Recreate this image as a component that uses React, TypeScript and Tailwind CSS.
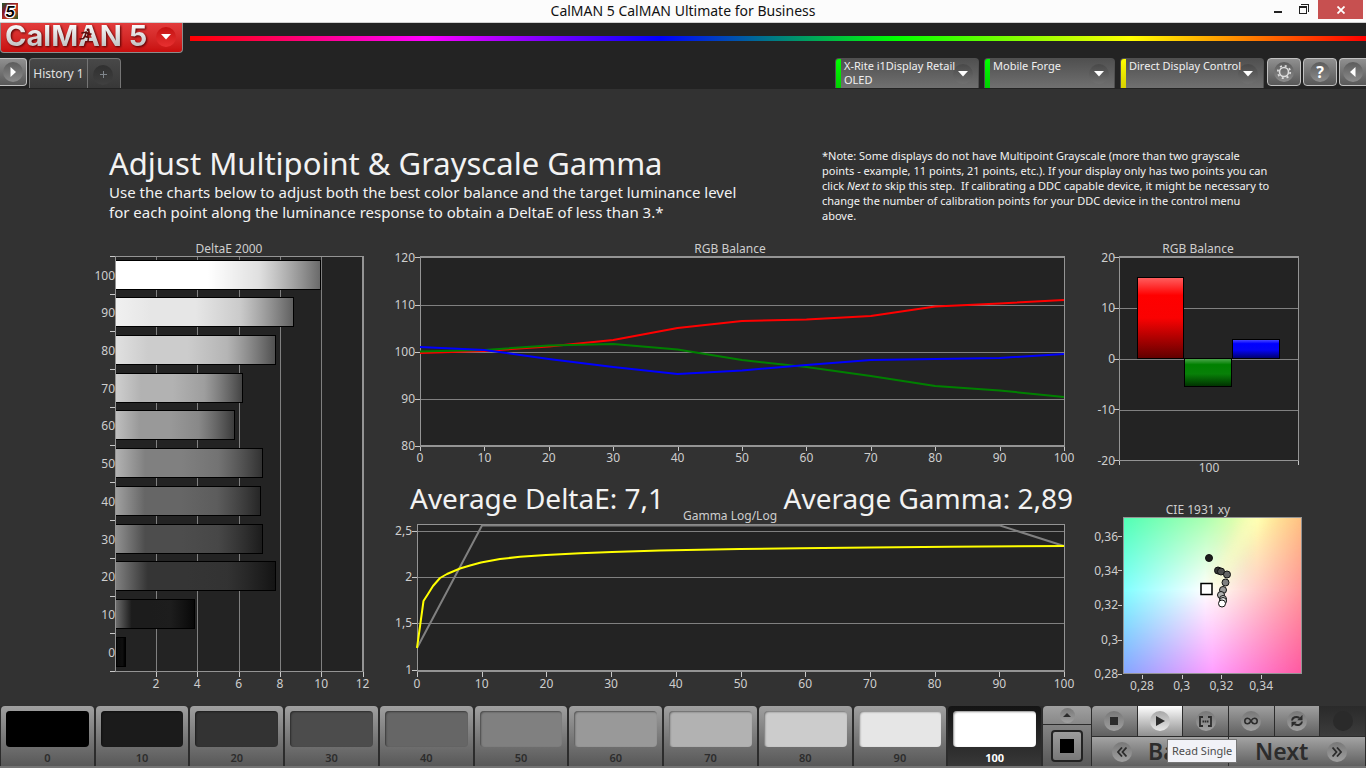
import React from "react";

type Point = [number, number];

const range = (n: number) => Array.from({ length: n }, (_, i) => i);
const toPoints = (pts: Point[]) => pts.map((p) => p.join(",")).join(" ");

const AXIS = "#949494";
const GRID = "#808080";
const TICK = "#c8c8c8";

function Label({ x, y, anchor = "middle", children }: { x: number; y: number; anchor?: "start" | "middle" | "end"; children: React.ReactNode }) {
  return (
    <text x={x} y={y - 1} textAnchor={anchor} dominantBaseline="central" className="fill-[#cecece] text-[12px]">
      {children}
    </text>
  );
}

const deltaBars = [
  { level: 100, end: 320, fill: "#ffffff", head: "#ffffff", tail: "#6a6a6a" },
  { level: 90, end: 293, fill: "#e6e6e6", head: "#f0f0f0", tail: "#606060" },
  { level: 80, end: 275, fill: "#cccccc", head: "#e0e0e0", tail: "#505050" },
  { level: 70, end: 242, fill: "#b2b2b2", head: "#cecece", tail: "#444444" },
  { level: 60, end: 234, fill: "#999999", head: "#bebebe", tail: "#3c3c3c" },
  { level: 50, end: 262, fill: "#808080", head: "#b2b2b2", tail: "#323232" },
  { level: 40, end: 260, fill: "#666666", head: "#a0a0a0", tail: "#262626" },
  { level: 30, end: 262, fill: "#4d4d4d", head: "#909090", tail: "#1c1c1c" },
  { level: 20, end: 275, fill: "#353535", head: "#808080", tail: "#141414" },
  { level: 10, end: 194, fill: "#1c1c1c", head: "#6c6c6c", tail: "#080808" },
  { level: 0, end: 125, fill: "#0c0c0c", head: "#000000", tail: "#000000" },
];

function DeltaEChart() {
  const pitch = 415 / 11;
  return (
    <svg viewBox="84 240 296 460" className="block h-auto w-full" role="img" aria-label="DeltaE 2000">
      <defs>
        {deltaBars.map((b) => (
          <linearGradient key={b.level} id={`delta-${b.level}`}>
            <stop offset="0" stopColor={b.head} />
            <stop offset="0.2" stopColor={b.fill} />
            <stop offset="0.45" stopColor={b.fill} />
            <stop offset="0.7" stopColor={b.fill} stopOpacity="0.86" />
            <stop offset="1" stopColor={b.tail} />
          </linearGradient>
        ))}
      </defs>
      <Label x={229} y={249}>DeltaE 2000</Label>
      <rect x="115" y="256" width="248" height="415" fill="#232323" />
      <g shapeRendering="crispEdges">
        {range(6).map((i) => (
          <g key={i}>
            <rect x={Math.round(156 + i * 41.3)} y="257" width="1" height="414" fill={GRID} />
            <rect x={Math.round(156 + i * 41.3)} y="672" width="1" height="5" fill={TICK} />
          </g>
        ))}
        {range(12).map((i) => (
          <rect key={i} x="110" y={Math.round(256 + i * pitch)} width="5" height="1" fill={TICK} />
        ))}
        <rect x="115" y="256" width="249" height="1" fill={AXIS} />
        <rect x="115" y="671" width="249" height="1" fill={AXIS} />
        <rect x="362" y="256" width="2" height="416" fill={AXIS} />
        {deltaBars.map((b, i) => {
          const y = Math.floor(260 + i * pitch);
          return (
            <g key={b.level}>
              <rect x="115" y={y} width={b.end - 114} height="30" fill="#000" />
              <rect x="116" y={y + 1} width={b.end - 116} height="28" fill="#232323" />
              <rect x="116" y={y + 1} width={b.end - 116} height="28" fill={`url(#delta-${b.level})`} />
            </g>
          );
        })}
        <rect x="115" y="256" width="1" height="416" fill={AXIS} />
      </g>
      {deltaBars.map((b, i) => (
        <Label key={b.level} x={115} y={276 + i * pitch} anchor="end">{b.level}</Label>
      ))}
      {range(6).map((i) => (
        <Label key={i} x={156 + i * 41.3} y={684}>{(i + 1) * 2}</Label>
      ))}
    </svg>
  );
}

const redLine = [353, 351, 346.5, 340, 328, 321, 319.5, 316, 306.5, 303.5, 300];
const greenLine = [351.5, 350, 345.5, 344, 349.5, 360, 367, 376, 386, 390.5, 397];
const blueLine = [347, 350, 359, 367, 374, 370.5, 365, 360, 359, 358, 354];

function RgbLineChart() {
  const px = (v: number) => 420 + v * 6.44;
  const line = (ys: number[]) => toPoints(ys.map((y, i) => [px(i * 10), y] as Point));
  return (
    <svg viewBox="380 240 698 232" className="block h-auto w-full" role="img" aria-label="RGB Balance by level">
      <Label x={730} y={249}>RGB Balance</Label>
      <rect x="420" y="257" width="644" height="189" fill="#232323" />
      <g shapeRendering="crispEdges">
        {[305, 352, 399].map((y) => (
          <rect key={y} x="420" y={y} width="644" height="1" fill={GRID} />
        ))}
        {[257, 305, 352, 399, 446].map((y) => (
          <rect key={y} x="415" y={y} width="5" height="1" fill={TICK} />
        ))}
        {range(11).map((i) => (
          <rect key={i} x={Math.round(px(i * 10))} y="447" width="1" height="4" fill={TICK} />
        ))}
        <rect x="420" y="256" width="645" height="2" fill={AXIS} />
        <rect x="420" y="445" width="645" height="2" fill={AXIS} />
        <rect x="420" y="256" width="1" height="190" fill={AXIS} />
        <rect x="1064" y="256" width="1" height="190" fill={AXIS} />
      </g>
      <g fill="none" strokeWidth="2" strokeLinejoin="round">
        <polyline points={line(redLine)} stroke="#ff0000" />
        <polyline points={line(greenLine)} stroke="#008000" />
        <polyline points={line(blueLine)} stroke="#0000ff" />
      </g>
      {range(5).map((i) => (
        <Label key={i} x={415} y={258 + i * 47.2} anchor="end">{120 - i * 10}</Label>
      ))}
      {range(11).map((i) => (
        <Label key={i} x={px(i * 10)} y={458}>{i * 10}</Label>
      ))}
    </svg>
  );
}

const gammaCurve: Point[] = [
  [417, 648], [423.5, 601], [428, 594], [433, 586], [440, 578], [447, 574], [460, 568.5], [470, 565.5], [481, 562.5], [500, 559],
  [520, 556.8], [546, 555], [580, 553.2], [612, 552], [660, 550.5], [740, 549], [800, 548.2], [870, 547.5], [950, 546.8], [1064, 546],
];

function GammaChart() {
  const px = (v: number) => 417 + v * 6.47;
  return (
    <svg viewBox="380 504 698 192" className="block h-auto w-full" role="img" aria-label="Gamma Log/Log">
      <Label x={730} y={516}>Gamma Log/Log</Label>
      <rect x="417" y="525" width="647" height="145" fill="#232323" />
      <g shapeRendering="crispEdges">
        {[531, 577, 623].map((y) => (
          <rect key={y} x="417" y={y} width="647" height="1" fill={GRID} />
        ))}
        {[531, 577, 623, 670].map((y) => (
          <rect key={y} x="412" y={y} width="5" height="1" fill={TICK} />
        ))}
        {range(11).map((i) => (
          <rect key={i} x={Math.round(px(i * 10))} y="672" width="1" height="5" fill={TICK} />
        ))}
        <rect x="417" y="524" width="648" height="1" fill={AXIS} />
        <rect x="417" y="670" width="648" height="2" fill={AXIS} />
        <rect x="417" y="524" width="1" height="147" fill={AXIS} />
        <rect x="1064" y="524" width="1" height="147" fill={AXIS} />
      </g>
      <polyline points="417,648 482,525.500 1000,525.500 1064,546" fill="none" stroke="#808080" strokeWidth="2" />
      <polyline points={toPoints(gammaCurve)} fill="none" stroke="#ffff00" strokeWidth="2" strokeLinejoin="round" />
      {["2,5", "2", "1,5", "1"].map((t, i) => (
        <Label key={t} x={412} y={531 + i * 46.4} anchor="end">{t}</Label>
      ))}
      {range(11).map((i) => (
        <Label key={i} x={px(i * 10)} y={684}>{i * 10}</Label>
      ))}
    </svg>
  );
}

function RgbBarChart() {
  return (
    <svg viewBox="1078 240 232 240" className="block h-auto w-full" role="img" aria-label="RGB Balance at 100">
      <defs>
        <linearGradient id="bar-red" x2="0" y2="1">
          <stop offset="0" stopColor="#ff6060" />
          <stop offset="0.22" stopColor="#ff0000" />
          <stop offset="0.5" stopColor="#fa0202" />
          <stop offset="1" stopColor="#600000" />
        </linearGradient>
        <linearGradient id="bar-green" x2="0" y2="1">
          <stop offset="0" stopColor="#50a850" />
          <stop offset="0.22" stopColor="#008000" />
          <stop offset="0.55" stopColor="#088008" />
          <stop offset="1" stopColor="#003000" />
        </linearGradient>
        <linearGradient id="bar-blue" x2="0" y2="1">
          <stop offset="0" stopColor="#5050ff" />
          <stop offset="0.22" stopColor="#0000ff" />
          <stop offset="0.55" stopColor="#0404f4" />
          <stop offset="1" stopColor="#000068" />
        </linearGradient>
      </defs>
      <Label x={1198} y={249}>RGB Balance</Label>
      <rect x="1120" y="257" width="178" height="204" fill="#232323" />
      <g shapeRendering="crispEdges">
        {[308, 359, 410].map((y) => (
          <rect key={y} x="1120" y={y} width="178" height="1" fill={GRID} />
        ))}
        {[257, 308, 359, 409, 460].map((y) => (
          <rect key={y} x="1114" y={y} width="5" height="1" fill={TICK} />
        ))}
        <rect x="1119" y="256" width="180" height="2" fill={AXIS} />
        <rect x="1119" y="460" width="180" height="1" fill={AXIS} />
        <rect x="1119" y="256" width="1" height="205" fill={AXIS} />
        <rect x="1298" y="256" width="1" height="205" fill={AXIS} />
        <rect x="1119" y="461" width="1" height="4" fill={TICK} />
        <rect x="1298" y="461" width="1" height="4" fill={TICK} />
        <rect x="1137.500" y="277.500" width="46" height="81" fill="url(#bar-red)" stroke="#000" />
        <rect x="1184.500" y="358.500" width="47" height="28" fill="url(#bar-green)" stroke="#000" />
        <rect x="1232.500" y="339.500" width="47" height="19" fill="url(#bar-blue)" stroke="#000" />
      </g>
      {[20, 10, 0, -10, -20].map((v, i) => (
        <Label key={v} x={1115} y={258 + i * 50.8} anchor="end">{v}</Label>
      ))}
      <Label x={1209} y={468}>100</Label>
    </svg>
  );
}

const ciePoints = [
  { x: 1209, y: 558, fill: "#1c1c1c" },
  { x: 1218, y: 570.5, fill: "#353535" },
  { x: 1221, y: 571.5, fill: "#4d4d4d" },
  { x: 1227, y: 574.5, fill: "#666666" },
  { x: 1225.5, y: 582.5, fill: "#808080" },
  { x: 1223, y: 590, fill: "#999999" },
  { x: 1221, y: 595, fill: "#b2b2b2" },
  { x: 1223, y: 599, fill: "#cccccc" },
  { x: 1223, y: 601, fill: "#e6e6e6" },
  { x: 1222, y: 603.5, fill: "#ffffff" },
];

function CieChart() {
  return (
    <svg viewBox="1078 500 232 196" className="block h-auto w-full" role="img" aria-label="CIE 1931 xy">
      <defs>
        <clipPath id="cie-clip">
          <rect x="1123" y="517" width="179" height="157" />
        </clipPath>
        <filter id="cie-soft" x="-20%" y="-20%" width="140%" height="140%">
          <feGaussianBlur stdDeviation="7" />
        </filter>
        <linearGradient id="cie-top" gradientUnits="userSpaceOnUse" x1="1123" y1="0" x2="1302" y2="0">
          <stop offset="0" stopColor="#50ffb4" />
          <stop offset="0.45" stopColor="#a8ffb0" />
          <stop offset="0.75" stopColor="#ffffa8" />
          <stop offset="1" stopColor="#ffc080" />
        </linearGradient>
        <linearGradient id="cie-mid" gradientUnits="userSpaceOnUse" x1="1123" y1="0" x2="1302" y2="0">
          <stop offset="0" stopColor="#80ffff" />
          <stop offset="0.46" stopColor="#ffffff" />
          <stop offset="0.56" stopColor="#fff4ee" />
          <stop offset="1" stopColor="#ff9898" />
        </linearGradient>
        <linearGradient id="cie-bottom" gradientUnits="userSpaceOnUse" x1="1123" y1="0" x2="1302" y2="0">
          <stop offset="0" stopColor="#84a4ff" />
          <stop offset="0.5" stopColor="#ff9cff" />
          <stop offset="1" stopColor="#ff58a0" />
        </linearGradient>
        <linearGradient id="cie-fade-top" x2="0" y2="1">
          <stop offset="0" stopColor="#fff" />
          <stop offset="0.46" stopColor="#000" />
        </linearGradient>
        <linearGradient id="cie-fade-bottom" x2="0" y2="1">
          <stop offset="0.46" stopColor="#000" />
          <stop offset="1" stopColor="#fff" />
        </linearGradient>
        <mask id="cie-mask-top">
          <rect x="1123" y="517" width="179" height="157" fill="url(#cie-fade-top)" />
        </mask>
        <mask id="cie-mask-bottom">
          <rect x="1123" y="517" width="179" height="157" fill="url(#cie-fade-bottom)" />
        </mask>
      </defs>
      <Label x={1198} y={510}>CIE 1931 xy</Label>
      <g clipPath="url(#cie-clip)">
        <rect x="1123" y="517" width="179" height="157" fill="url(#cie-mid)" />
        <rect x="1123" y="517" width="179" height="157" fill="url(#cie-top)" mask="url(#cie-mask-top)" />
        <rect x="1123" y="517" width="179" height="157" fill="url(#cie-bottom)" mask="url(#cie-mask-bottom)" />
        <path d="M1209 590L1250 510L1266 510L1217 590Z" fill="#ffffc0" opacity="0.7" filter="url(#cie-soft)" />
      </g>
      <g shapeRendering="crispEdges">
        <rect x="1123.500" y="517.500" width="178" height="156" fill="none" stroke={AXIS} />
        {[536, 570, 605, 640, 674].map((y) => (
          <rect key={y} x="1118" y={y} width="4" height="1" fill={TICK} />
        ))}
        {[1142, 1182, 1221, 1261].map((x) => (
          <rect key={x} x={x} y="675" width="1" height="4" fill={TICK} />
        ))}
      </g>
      <rect x="1201" y="583.500" width="11" height="11" fill="#ffffff" stroke="#000" strokeWidth="1.500" />
      {ciePoints.map((p) => (
        <circle key={`${p.x}-${p.y}`} cx={p.x} cy={p.y} r="3.500" fill={p.fill} stroke="#111" />
      ))}
      {["0,36", "0,34", "0,32", "0,3", "0,28"].map((t, i) => (
        <Label key={t} x={1118} y={537 + i * 34.4} anchor="end">{t}</Label>
      ))}
      {["0,28", "0,3", "0,32", "0,34"].map((t, i) => (
        <Label key={t} x={1142 + i * 39.7} y={686}>{t}</Label>
      ))}
    </svg>
  );
}

function Logo() {
  return (
    <button type="button" aria-label="CalMAN 5 menu" className="relative flex h-[30px] w-[183px] items-start rounded-b-[4px] border border-t-0 border-[#8c8c8c] bg-linear-to-b from-[#e23c3c] to-[#c80c0c] pl-1">
      <span className="bg-linear-to-b from-white to-[#bcbcbc] bg-clip-text font-[Inter] text-[29px] leading-[26px] font-bold whitespace-pre text-transparent drop-shadow-[1px_1px_1px_#500000]">CalMAN 5</span>
      <svg viewBox="0 0 14 14" className="absolute top-[5px] left-[78px] size-[14px]" fill="none" stroke="#5c0c0c" strokeWidth="1.600" strokeLinecap="round" strokeLinejoin="round" aria-hidden="true">
        <circle cx="9" cy="1.800" r="1.400" fill="#5c0c0c" stroke="none" />
        <path d="M3 5L7.500 4L6 8L9.500 9.500L9 13M7.500 4L9.500 6.500L12 6M6 8L4.500 10.500L1 11" />
      </svg>
      <span className="absolute top-1 right-[6px] flex size-5 items-center justify-center rounded-full bg-linear-to-b from-[#c41010] to-[#e83030]">
        <svg viewBox="0 0 10 6" className="h-[6px] w-[10px]" fill="#fff" aria-hidden="true"><path d="M0 0H10L5 5.500Z" /></svg>
      </span>
    </button>
  );
}

function TitleBar() {
  return (
    <header className="relative flex h-[23px] items-start justify-between border-b border-[#d0d0d0] bg-[#fcfcfc]">
      <svg viewBox="0 0 16 16" className="mt-[3px] ml-[2px] size-4" aria-hidden="true">
        <defs>
          <linearGradient id="app-icon" x2="1" y2="1">
            <stop offset="0" stopColor="#1c5c2c" />
            <stop offset="0.3" stopColor="#801828" />
            <stop offset="0.65" stopColor="#c83c20" />
            <stop offset="1" stopColor="#186028" />
          </linearGradient>
        </defs>
        <rect width="16" height="16" fill="url(#app-icon)" />
        <text x="8" y="13.500" textAnchor="middle" className="fill-black stroke-white font-[Inter] text-[15px] font-bold italic [paint-order:stroke]" strokeWidth="2.500">5</text>
      </svg>
      <h1 className="absolute inset-x-0 top-0 text-center text-[14px] leading-[22px] text-[#111]">CalMAN 5 CalMAN Ultimate for Business</h1>
      <div className="relative flex items-start pr-[3px]">
        <button type="button" aria-label="Minimize" className="h-[19px] w-6">
          <svg viewBox="0 0 24 19" className="h-[19px] w-6" aria-hidden="true"><rect x="6" y="11" width="8" height="2" fill="#222" /></svg>
        </button>
        <button type="button" aria-label="Restore" className="mr-[2px] h-[19px] w-6">
          <svg viewBox="0 0 24 19" className="h-[19px] w-6" fill="#222" shapeRendering="crispEdges" aria-hidden="true">
            <path d="M9 4H17V12H16V5H9Z" />
            <path fillRule="evenodd" d="M7 6H15V14H7ZM8 8V13H14V8Z" />
          </svg>
        </button>
        <button type="button" aria-label="Close" className="flex h-[19px] w-[45px] items-center justify-center bg-[#c75050]">
          <svg viewBox="0 0 8 8" className="size-2" fill="none" stroke="#fff" strokeWidth="1.800" aria-hidden="true"><path d="M0.500 0.500L7.500 7.500M7.500 0.500L0.500 7.500" /></svg>
        </button>
      </div>
    </header>
  );
}

function DeviceTab({ lines, width, stripe }: { lines: string[]; width: string; stripe: string }) {
  return (
    <button type="button" className={`${width} flex h-[30px] items-start overflow-hidden rounded-t-[4px] border border-b-0 border-[#505050] bg-linear-to-b from-[#505050] to-[#707070] text-left`}>
      <span className={`${stripe} h-full w-[5px] shrink-0`} />
      <span className="z-10 w-0 grow pl-[3px] text-[11px] leading-[14px] whitespace-nowrap text-[#f0f0f0]">
        {lines.map((l) => (
          <span key={l} className="block">{l}</span>
        ))}
      </span>
      <span className="mt-[5px] mr-[5px] flex size-5 shrink-0 items-center justify-center rounded-full bg-linear-to-b from-[#484848] to-[#707070]">
        <svg viewBox="0 0 10 6" className="h-[6px] w-[10px]" fill="#fff" aria-hidden="true"><path d="M0 0H10L5 5.500Z" /></svg>
      </span>
    </button>
  );
}

function SquareButton({ label, className, children }: { label: string; className: string; children: React.ReactNode }) {
  return (
    <button type="button" aria-label={label} className={`${className} flex h-[28px] shrink-0 items-center justify-center border border-[#c0c0c0] bg-linear-to-b from-[#909090] to-[#585858]`}>
      <span className="flex size-5 items-center justify-center rounded-full bg-linear-to-b from-[#5c5c5c] to-[#8c8c8c]">{children}</span>
    </button>
  );
}

function Toolbar() {
  return (
    <div className="bg-[#232323]">
      <div className="flex items-center gap-[7px]">
        <Logo />
        <div className="h-[5px] grow bg-[linear-gradient(to_right,#ff0000,#ff00ff,#0000ff,#00ff00,#ffff00,#ff0000)]" />
      </div>
      <div className="flex items-start justify-between overflow-hidden pt-[5px]">
        <nav className="flex">
          <SquareButton label="Expand panel" className="mr-[2px] w-[27px] rounded-r-[4px] border-l-0">
            <svg viewBox="0 0 6 10" className="h-[10px] w-[6px]" fill="#fff" aria-hidden="true"><path d="M0.500 0V10L6 5Z" /></svg>
          </SquareButton>
          <div className="flex h-[30px] overflow-hidden rounded-t-[4px] border border-b-0 border-[#757575] bg-linear-to-b from-[#484848] to-[#383838]">
            <button type="button" className="w-[58px] border-r border-[#757575] text-[12px] whitespace-nowrap text-[#e0e0e0]">History 1</button>
            <button type="button" aria-label="Add history" className="flex w-8 items-center justify-center pr-[2px]">
              <span className="mt-[2px] flex size-5 items-center justify-center rounded-full bg-linear-to-b from-[#303030] to-[#404040]">
                <svg viewBox="0 0 7 7" className="size-[7px]" stroke="#80868c" aria-hidden="true"><path d="M0 3.500H7M3.500 0V7" /></svg>
              </span>
            </button>
          </div>
        </nav>
        <div className="flex">
          <div className="mr-[3px] flex gap-[5px]">
            <DeviceTab lines={["X-Rite i1Display Retail", "OLED"]} width="w-[144px]" stripe="bg-linear-to-b from-[#00ff00] to-[#00d000]" />
            <DeviceTab lines={["Mobile Forge"]} width="w-[131px]" stripe="bg-linear-to-b from-[#00ff00] to-[#00d000]" />
            <DeviceTab lines={["Direct Display Control"]} width="w-[144px]" stripe="bg-linear-to-b from-[#ffff00] to-[#d8d000]" />
          </div>
          <div className="flex gap-[2px]">
            <SquareButton label="Settings" className="w-[34px] rounded-[4px]">
              <svg viewBox="0 0 16 16" className="size-4" fill="none" stroke="#dcdcdc" aria-hidden="true">
                <circle cx="8" cy="8" r="4.500" strokeWidth="1.600" />
                <circle cx="8" cy="8" r="6.200" strokeWidth="1.800" strokeDasharray="2 2.870" />
              </svg>
            </SquareButton>
            <SquareButton label="Help" className="w-[34px] rounded-[4px]">
              <span className="text-[16px] leading-5 font-bold text-white">?</span>
            </SquareButton>
            <SquareButton label="Collapse panel" className="w-[27px] rounded-l-[4px] border-r-0">
              <svg viewBox="0 0 6 10" className="h-[10px] w-[6px]" fill="#fff" aria-hidden="true"><path d="M5.500 0V10L0 5Z" /></svg>
            </SquareButton>
          </div>
        </div>
      </div>
    </div>
  );
}

const patches = [
  { level: 0, color: "bg-[#000000]" },
  { level: 10, color: "bg-[#1b1b1b]" },
  { level: 20, color: "bg-[#333333]" },
  { level: 30, color: "bg-[#4c4c4c]" },
  { level: 40, color: "bg-[#666666]" },
  { level: 50, color: "bg-[#808080]" },
  { level: 60, color: "bg-[#999999]" },
  { level: 70, color: "bg-[#b2b2b2]" },
  { level: 80, color: "bg-[#cccccc]" },
  { level: 90, color: "bg-[#e6e6e6]" },
  { level: 100, color: "bg-[#ffffff]" },
];

function Patch({ level, color }: { level: number; color: string }) {
  const active = level === 100;
  return (
    <button
      type="button"
      aria-pressed={active}
      className={`flex h-[60px] flex-col rounded-t-[4px] px-[5px] pt-[5px] text-center text-[11px] ${
        active ? "bg-linear-to-b from-[#141414] to-[#383838] font-bold text-white" : "bg-linear-to-b from-[#a0a0a0] to-[#585858] font-semibold text-[#2c2c2c]"
      }`}
    >
      <span className={`${color} block h-9 w-full rounded-[4px] shadow-[inset_1px_1px_2px_rgba(0,0,0,0.45)]`} />
      <span className="w-full pt-1 leading-[14px]">{level}</span>
    </button>
  );
}

function RoundIcon({ children, className = "size-5 from-[#787878] to-[#a0a0a0]" }: { children: React.ReactNode; className?: string }) {
  return <span className={`${className} flex shrink-0 items-center justify-center rounded-full bg-linear-to-b`}>{children}</span>;
}

function ControlButton({ label, className = "from-[#a0a0a0] to-[#606060]", children }: { label: string; className?: string; children: React.ReactNode }) {
  return (
    <button type="button" aria-label={label} className={`${className} flex h-[30px] items-center justify-center bg-linear-to-b`}>
      {children}
    </button>
  );
}

function Footer() {
  return (
    <footer className="flex items-start gap-px border-b-2 border-[#747474] bg-[#2c2c2c]">
      <div className="grid grow grid-cols-11 gap-[2px] px-px">
        {patches.map((p) => (
          <Patch key={p.level} level={p.level} color={p.color} />
        ))}
      </div>
      <div className="flex w-12 flex-col gap-px">
        <button type="button" aria-label="Show patch options" className="flex h-[18px] items-center justify-center rounded-t-[4px] bg-linear-to-b from-[#a0a0a0] to-[#888888]">
          <RoundIcon className="size-[15px] from-[#787878] to-[#a0a0a0]">
            <svg viewBox="0 0 8 4" className="h-1 w-2" fill="#2c2c2c" aria-hidden="true"><path d="M0 4H8L4 0Z" /></svg>
          </RoundIcon>
        </button>
        <button type="button" aria-label="Patch window" className="flex h-[41px] items-center justify-center bg-linear-to-b from-[#848484] to-[#585858]">
          <span className="flex size-8 items-center justify-center rounded-[4px] border-2 border-[#222] bg-linear-to-b from-[#9c9c9c] to-[#787878]">
            <span className="size-[14px] bg-black" />
          </span>
        </button>
      </div>
      <div className="relative w-[274px] pr-px">
        <div className="grid grid-cols-6 gap-px overflow-hidden rounded-t-[4px]">
          <ControlButton label="Stop">
            <RoundIcon><span className="size-2 bg-[#2c2c2c]" /></RoundIcon>
          </ControlButton>
          <ControlButton label="Read single" className="from-[#ffffff] to-[#909090]">
            <RoundIcon className="size-5 from-[#a8a8a8] to-[#e8e8e8]">
              <svg viewBox="0 0 9 10" className="ml-[2px] h-[10px] w-[9px]" fill="#2c2c2c" aria-hidden="true"><path d="M0 0V10L9 5Z" /></svg>
            </RoundIcon>
          </ControlButton>
          <ControlButton label="Read series">
            <RoundIcon>
              <svg viewBox="0 0 13 11" className="h-[11px] w-[13px]" fill="none" stroke="#2c2c2c" strokeWidth="1.800" aria-hidden="true">
                <path d="M4 1H1V10H4M9 1H12V10H9" />
                <path d="M3.500 5.500H9.500" strokeDasharray="1.600 0.600" />
              </svg>
            </RoundIcon>
          </ControlButton>
          <ControlButton label="Read continuous">
            <RoundIcon>
              <svg viewBox="0 0 14 8" className="h-2 w-[14px]" fill="none" stroke="#2c2c2c" strokeWidth="1.600" aria-hidden="true">
                <path d="M7 4C5.800 2 4.800 1.200 3.600 1.200A2.800 2.800 0 0 0 3.600 6.800C4.800 6.800 5.800 6 7 4C8.200 2 9.200 1.200 10.400 1.200A2.800 2.800 0 0 1 10.400 6.800C9.200 6.800 8.200 6 7 4Z" />
              </svg>
            </RoundIcon>
          </ControlButton>
          <ControlButton label="Refresh">
            <RoundIcon>
              <svg viewBox="0 0 14 14" className="size-[14px]" aria-hidden="true">
                <path d="M2 6.500C2.300 3.500 6 1.800 9.500 3.800M12 7.500C11.700 10.500 8 12.200 4.500 10.200" fill="none" stroke="#2c2c2c" strokeWidth="2" />
                <path d="M12.500 0.800V6.200H7.200ZM1.500 13.200V7.800H6.800Z" fill="#2c2c2c" />
              </svg>
            </RoundIcon>
          </ControlButton>
          <ControlButton label="Record" className="from-[#2a2a2a] to-[#3c3c3c]">
            <span className="size-5 rounded-full bg-[#2a2a2a]" />
          </ControlButton>
        </div>
        <div className="mt-px grid grid-cols-2 gap-px text-[23px] leading-[29px] font-semibold text-[#2c2c2c]">
          <button type="button" className="flex h-[29px] items-center gap-4 bg-linear-to-b from-[#a4a4a4] to-[#606060] pl-5">
            <RoundIcon>
              <svg viewBox="0 0 10 10" className="size-[10px]" fill="none" stroke="#2c2c2c" strokeWidth="1.800" aria-hidden="true"><path d="M5 0.500L1 5L5 9.500M9.500 0.500L5.500 5L9.500 9.500" /></svg>
            </RoundIcon>
            Back
          </button>
          <button type="button" className="flex h-[29px] items-center justify-between bg-linear-to-b from-[#a4a4a4] to-[#606060] pr-[18px] pl-[26px]">
            Next
            <RoundIcon>
              <svg viewBox="0 0 10 10" className="size-[10px]" fill="none" stroke="#2c2c2c" strokeWidth="1.800" aria-hidden="true"><path d="M0.500 0.500L4.500 5L0.500 9.500M5 0.500L9 5L5 9.500" /></svg>
            </RoundIcon>
          </button>
        </div>
        <div role="tooltip" className="absolute top-[33px] left-[75px] border border-[#767676] bg-[#f1f2f7] px-1 text-[11px] leading-[22px] whitespace-nowrap text-[#4c4c4c]">Read Single</div>
      </div>
    </footer>
  );
}

export default function App() {
  return (
    <div className="flex min-h-screen flex-col bg-[#323232] font-['Noto_Sans','Open_Sans',sans-serif] text-[#f2f2f2]">
      <TitleBar />
      <Toolbar />
      <main className="grow border-t border-[#232323] pr-14 pl-[84px]">
        <section className="flex items-start justify-between pt-[56px] pl-[25px]">
          <div>
            <h2 className="text-[31px] leading-[37px]">Adjust Multipoint &amp; Grayscale Gamma</h2>
            <p className="text-[15px] leading-5">
              Use the charts below to adjust both the best color balance and the target luminance level
              <br />
              for each point along the luminance response to obtain a DeltaE of less than 3.*
            </p>
          </div>
          <p className="w-[488px] pt-[3px] text-[11px] leading-[15px] whitespace-nowrap">
            *Note: Some displays do not have Multipoint Grayscale (more than two grayscale
            <br />
            points - example, 11 points, 21 points, etc.). If your display only has two points you can
            <br />
            click <em>Next to</em> skip this step.&nbsp; If calibrating a DDC capable device, it might be necessary to
            <br />
            change the number of calibration points for your DDC device in the control menu
            <br />
            above.
          </p>
        </section>
        <section className="grid grid-cols-[296fr_698fr_232fr] items-start pt-[17px]">
          <DeltaEChart />
          <div>
            <RgbLineChart />
            <div className="flex justify-between pt-4 pr-[5px] pl-[30px] text-[28px] leading-[20px] whitespace-nowrap">
              <p className="h-4">Average DeltaE: 7,1</p>
              <p className="h-4">Average Gamma: 2,89</p>
            </div>
            <GammaChart />
          </div>
          <div className="flex flex-col gap-5">
            <RgbBarChart />
            <CieChart />
          </div>
        </section>
      </main>
      <Footer />
    </div>
  );
}
